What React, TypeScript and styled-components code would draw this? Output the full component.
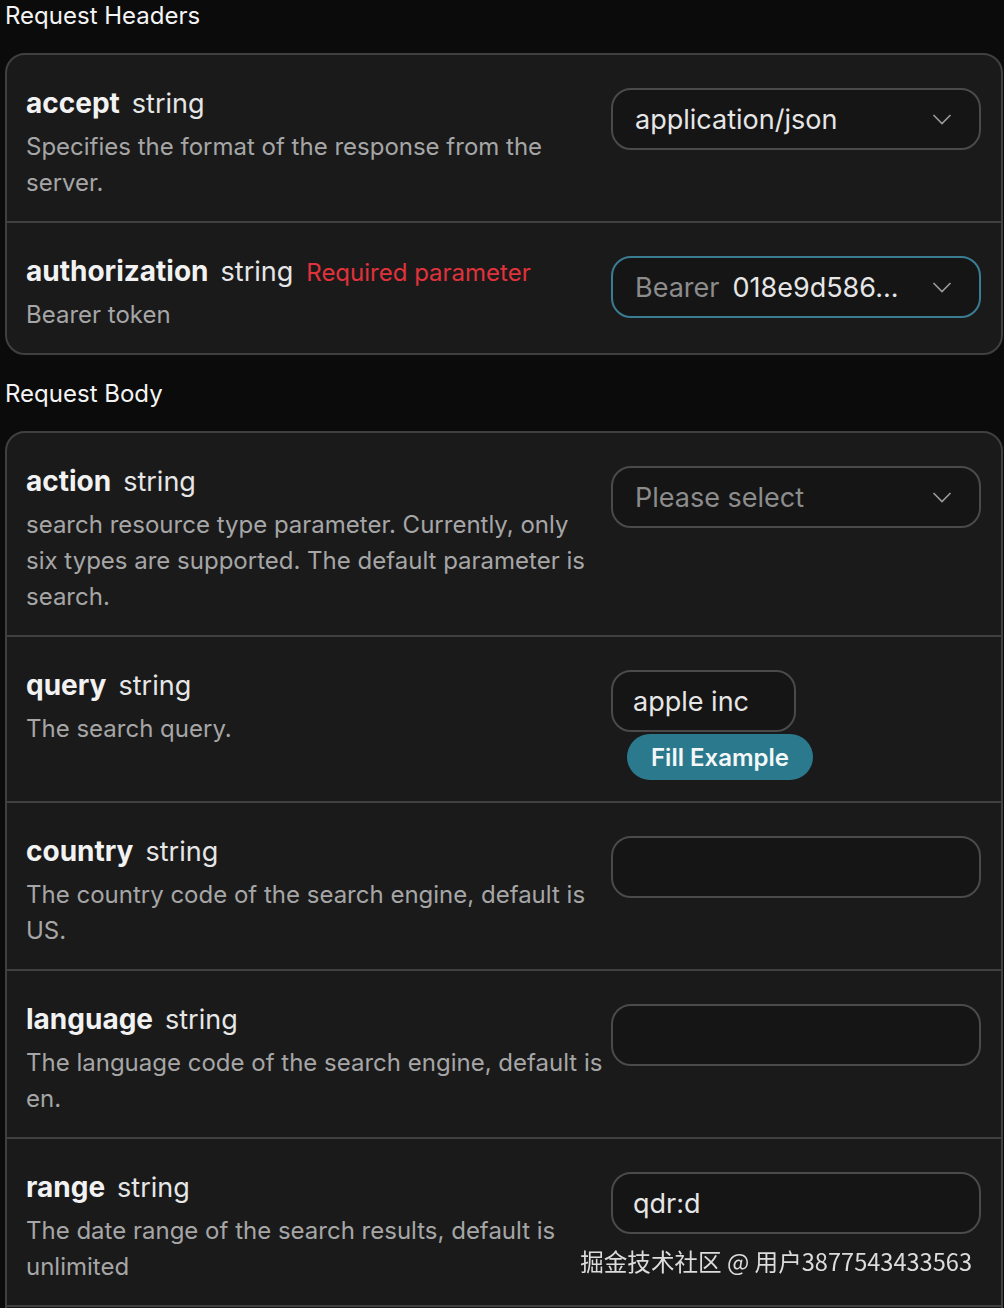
import { createGlobalStyle, styled } from 'styled-components';

const GlobalStyle = createGlobalStyle`
  html, body {
    margin: 0;
    padding: 0;
    background: #0b0b0b;
  }
  body {
    font-family: Inter, "Noto Sans", "Noto Sans CJK SC", sans-serif;
    color: #f2f2f2;
  }
  * {
    box-sizing: border-box;
  }
`;

type Param = {
  name: string;
  type: string;
  required?: boolean;
  desc: string;
  control: React.ReactNode;
};

function Chevron() {
  return (
    <ChevronSvg width="20" height="11" viewBox="0 0 20 11">
      <polyline points="1.5,1 10,9.5 18.5,1" fill="none" stroke="#9b9b9b" strokeWidth="1.6" />
    </ChevronSvg>
  );
}

function ParamRow({ name, type, required, desc, control }: Param) {
  return (
    <Row>
      <Info>
        <TitleLine>
          <ParamName>{name}</ParamName>
          <ParamType>{type}</ParamType>
          {required && <RequiredTag>Required parameter</RequiredTag>}
        </TitleLine>
        <ParamDesc>{desc}</ParamDesc>
      </Info>
      <Control>{control}</Control>
    </Row>
  );
}

export default function App() {
  const headers: Param[] = [
    {
      name: 'accept',
      type: 'string',
      desc: 'Specifies the format of the response from the server.',
      control: (
        <Select>
          <SelectValue>application/json</SelectValue>
          <Chevron />
        </Select>
      ),
    },
    {
      name: 'authorization',
      type: 'string',
      required: true,
      desc: 'Bearer token',
      control: (
        <Select focused>
          <SelectValue>
            <Muted>Bearer</Muted>
            018e9d586...
          </SelectValue>
          <Chevron />
        </Select>
      ),
    },
  ];

  const body: Param[] = [
    {
      name: 'action',
      type: 'string',
      desc: 'search resource type parameter. Currently, only six types are supported. The default parameter is search.',
      control: (
        <Select>
          <SelectValue muted>Please select</SelectValue>
          <Chevron />
        </Select>
      ),
    },
    {
      name: 'query',
      type: 'string',
      desc: 'The search query.',
      control: (
        <>
          <TextInput small>apple inc</TextInput>
          <FillButton>Fill Example</FillButton>
        </>
      ),
    },
    {
      name: 'country',
      type: 'string',
      desc: 'The country code of the search engine, default is US.',
      control: <TextInput />,
    },
    {
      name: 'language',
      type: 'string',
      desc: 'The language code of the search engine, default is en.',
      control: <TextInput />,
    },
    {
      name: 'range',
      type: 'string',
      desc: 'The date range of the search results, default is unlimited',
      control: <TextInput>qdr:d</TextInput>,
    },
  ];

  return (
    <Page>
      <GlobalStyle />
      <SectionTitle>Request Headers</SectionTitle>
      <Card>
        {headers.map((p) => (
          <ParamRow key={p.name} {...p} />
        ))}
      </Card>
      <SectionTitle spaced>Request Body</SectionTitle>
      <Card continues>
        {body.map((p) => (
          <ParamRow key={p.name} {...p} />
        ))}
      </Card>
      <Watermark>掘金技术社区 @ 用户3877543433563</Watermark>
    </Page>
  );
}

const Page = styled.div`
  padding: 0 1px 0 5px;
`;

const SectionTitle = styled.div<{ spaced?: boolean }>`
  font-size: 24px;
  line-height: 32px;
  color: #f4f4f4;
  margin: ${({ spaced }) => (spaced ? '23px 0 21px' : '0 0 21px')};
`;

const Row = styled.div`
  display: flex;
  gap: 8px;
  padding: 28px 20px 20px 19px;
  & + & {
    border-top: 2px solid #404041;
  }
`;

/* the body list goes on below the fold: square bottom and a divider after the last row */
const Card = styled.div<{ continues?: boolean }>`
  width: 998px;
  background: #1a1a1b;
  border: 2px solid #404041;
  border-radius: ${({ continues }) => (continues ? '20px 20px 0 0' : '20px')};
  overflow: hidden;
  padding-bottom: ${({ continues }) => (continues ? '24px' : '0')};

  & > ${Row}:last-child {
    border-bottom: ${({ continues }) => (continues ? '2px solid #404041' : 'none')};
  }
`;

const Info = styled.div`
  flex: 0 0 577px;
`;

const TitleLine = styled.div`
  display: flex;
  align-items: baseline;
  gap: 12px;
  height: 40px;
  line-height: 40px;
`;

const ParamName = styled.span`
  font-size: 28px;
  font-weight: 700;
  color: #f2f2f2;
`;

const ParamType = styled.span`
  font-size: 27px;
  color: #e6e6e6;
`;

const RequiredTag = styled.span`
  font-size: 24px;
  color: #e0323b;
  margin-left: 1px;
`;

const ParamDesc = styled.div`
  margin-top: 6px;
  font-size: 24px;
  line-height: 36px;
  color: #a6a6a6;
`;

const Control = styled.div`
  flex: 0 0 370px;
  margin-top: 5px;
  display: flex;
  flex-direction: column;
  align-items: flex-start;
`;

const Select = styled.div<{ focused?: boolean }>`
  width: 100%;
  height: 62px;
  border: 2px solid ${({ focused }) => (focused ? '#3a7d92' : '#4a4a4b')};
  border-radius: 20px;
  background: #151516;
  display: flex;
  align-items: center;
  justify-content: space-between;
  padding: 0 27px 0 22px;
`;

const SelectValue = styled.span<{ muted?: boolean }>`
  font-size: 27px;
  color: ${({ muted }) => (muted ? '#8c8c8c' : '#e6e6e6')};
  display: flex;
  gap: 13px;
`;

const Muted = styled.span`
  color: #8c8c8c;
`;

const ChevronSvg = styled.svg`
  flex: none;
`;

const TextInput = styled.div<{ small?: boolean }>`
  width: ${({ small }) => (small ? '185px' : '100%')};
  height: 62px;
  border: 2px solid #4a4a4b;
  border-radius: 20px;
  background: #151516;
  display: flex;
  align-items: center;
  padding: 0 20px;
  font-size: 27px;
  color: #e6e6e6;
`;

const FillButton = styled.button`
  margin: 2px 0 1px 16px;
  height: 46px;
  padding: 0 24px;
  border: none;
  border-radius: 23px;
  background: #2b798d;
  color: #f4f7f8;
  font-family: Inter, "Noto Sans", sans-serif;
  font-size: 24px;
  font-weight: 600;
`;

const Watermark = styled.div`
  position: fixed;
  right: 32px;
  bottom: 30px;
  font-family: "Noto Sans CJK SC", "Noto Sans", sans-serif;
  font-size: 23.6px;
  color: #dcdcdc;
  pointer-events: none;
`;
